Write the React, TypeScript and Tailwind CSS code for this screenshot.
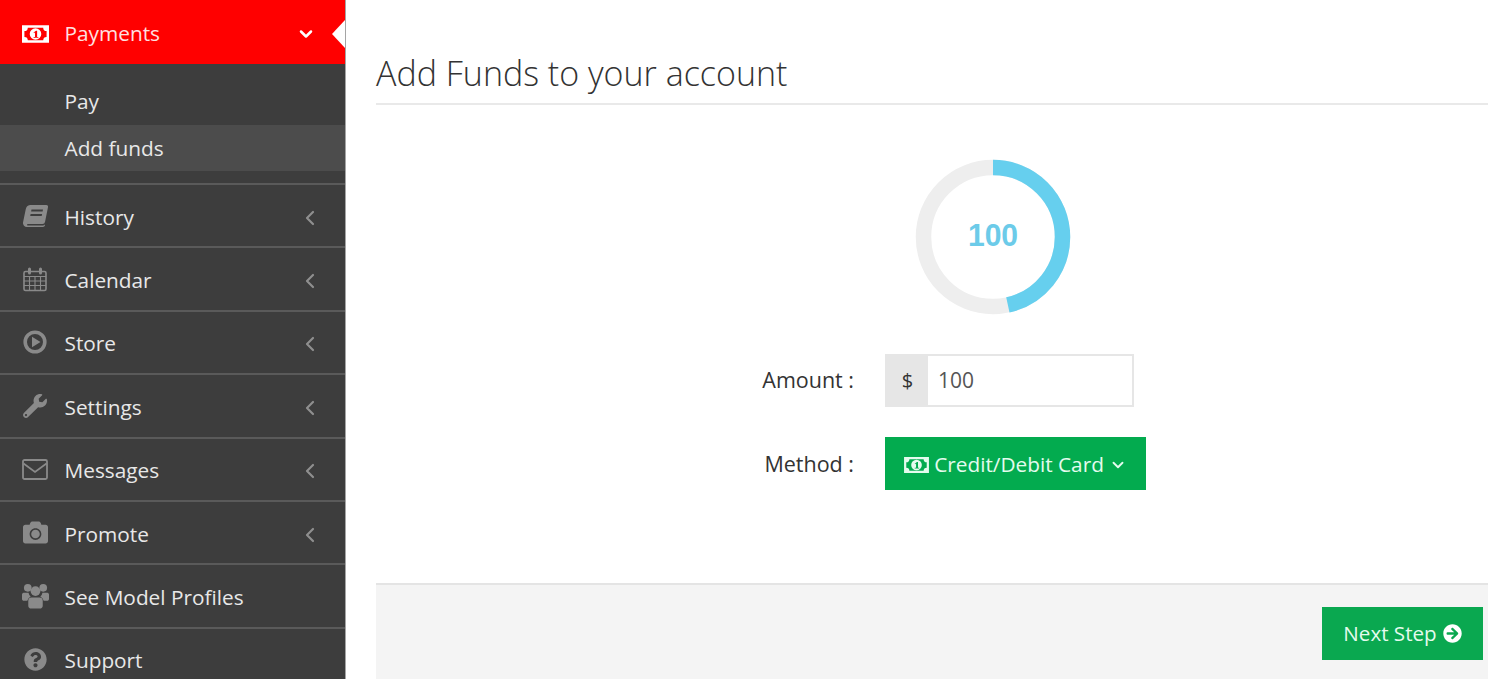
import { ChevronDown, ChevronLeft } from "lucide-react";
import { FaWrench, FaCamera, FaQuestionCircle, FaArrowCircleRight } from "react-icons/fa";

function MoneyIcon({ className }: { className?: string }) {
  return (
    <svg viewBox="0 0 28 18" className={className} fill="currentColor">
      <path
        fillRule="evenodd"
        d="M0 0h28v18H0zM2.500 6v6a3.500 3.500 0 0 1 3.500 3.500h16a3.500 3.500 0 0 1 3.500-3.500V6A3.500 3.500 0 0 1 22 2.500H6A3.500 3.500 0 0 1 2.500 6zM14 3a6 6 0 1 0 0 12 6 6 0 0 0 0-12zM12 7.500l2.500-2h1.200v6.500H17v1h-5v-1h1.500V7.300l-1 .8z"
      />
    </svg>
  );
}

function BookIcon({ className }: { className?: string }) {
  return (
    <svg viewBox="0 0 25 22" className={className} fill="currentColor">
      <path
        fillRule="evenodd"
        d="M7 0h16a2 2 0 0 1 2 2.300L22 17a2.500 2.500 0 0 1-2.500 2H4.500a1 1 0 0 0 0 1.500H20a1.500 1.500 0 0 0 1.400-1l.6.800A2.500 2.500 0 0 1 20 22H4a4 4 0 0 1-4-4.500L2.800 4A5 5 0 0 1 7 0zM8.500 4.500l-.4 2h11.500l.4-2zM7.600 9l-.4 2h11.500l.4-2z"
      />
    </svg>
  );
}

function CalendarIcon({ className }: { className?: string }) {
  return (
    <svg viewBox="0 0 24 24" className={className} fill="none" stroke="currentColor">
      <rect x="1" y="4" width="22" height="19" rx="1.500" strokeWidth="1.600" />
      <path d="M1 9h22M1 13.500h22M1 18h22M6.500 9v14M12 9v14M17.500 9v14" strokeWidth="1.100" />
      <path d="M6.500 1.500v4M17.500 1.500v4" strokeWidth="3" strokeLinecap="round" />
    </svg>
  );
}

function PlayIcon({ className }: { className?: string }) {
  return (
    <svg viewBox="0 0 24 24" className={className} fill="none">
      <circle cx="12" cy="12" r="9.800" stroke="currentColor" strokeWidth="3.600" />
      <path d="M9 6.800v10.400l8.500-5.200z" fill="currentColor" />
    </svg>
  );
}

function EnvelopeIcon({ className }: { className?: string }) {
  return (
    <svg viewBox="0 0 26 21" className={className} fill="none" stroke="currentColor" strokeWidth="1.800">
      <rect x="1" y="1" width="24" height="19" rx="1.500" />
      <path d="M1.500 4.500 13 13l11.500-8.500" />
    </svg>
  );
}

function UsersIcon({ className }: { className?: string }) {
  return (
    <svg viewBox="0 0 28 26" className={className} fill="currentColor">
      <circle cx="6" cy="4.500" r="4" />
      <circle cx="22" cy="4.500" r="4" />
      <circle cx="14" cy="8" r="5" />
      <path d="M0 11.500C0 10 1 9.500 2.500 9.500h4.300A7 7 0 0 0 9 13.600 7.500 7.500 0 0 0 5.500 18H2C.8 18 0 17 0 16zM28 11.500c0-1.500-1-2-2.500-2h-4.300A7 7 0 0 1 19 13.600a7.500 7.500 0 0 1 3.500 4.400H26c1.200 0 2-1 2-2zM10 14.500h8a3.500 3.500 0 0 1 3.500 3.500v5c0 1.700-1.300 3-3 3h-9c-1.700 0-3-1.300-3-3v-5a3.500 3.500 0 0 1 3.500-3.500z" />
    </svg>
  );
}

const menu = [
  { label: "History", icon: <BookIcon className="w-[25px] h-[22px]" />, arrow: true },
  { label: "Calendar", icon: <CalendarIcon className="w-[24px] h-[25px]" />, arrow: true },
  { label: "Store", icon: <PlayIcon className="w-[24px] h-[24px]" />, arrow: true },
  { label: "Settings", icon: <FaWrench className="w-[24px] h-[24px]" />, arrow: true },
  { label: "Messages", icon: <EnvelopeIcon className="w-[26px] h-[21px]" />, arrow: true },
  { label: "Promote", icon: <FaCamera className="w-[27px] h-[25px]" />, arrow: true },
  { label: "See Model Profiles", icon: <UsersIcon className="w-[27px] h-[26px]" />, arrow: false },
  { label: "Support", icon: <FaQuestionCircle className="w-[23px] h-[23px]" />, arrow: false },
];

export default function App() {
  return (
    <div className="flex h-[679px] overflow-hidden bg-white font-['Open_Sans',sans-serif]">
      <aside className="w-[346px] shrink-0 bg-[#3d3d3d] border-r border-[#a5a5a5] text-[#e8e8e8] text-[20.800px]">
        <div className="relative flex items-center h-[64px] bg-[#ff0000] text-[#ffe0e0] pt-[3px]">
          <div className="w-[64.500px] pl-[22px] flex shrink-0">
            <MoneyIcon className="w-[27px] h-[18px] text-white" />
          </div>
          <span>Payments</span>
          <ChevronDown className="ml-auto mr-[29px] w-[20px] h-[20px] text-white" strokeWidth={3} />
          <svg viewBox="0 0 13 28" className="absolute right-0 top-[20px] w-[13px] h-[28px] text-white" fill="currentColor">
            <polygon points="13,0 0,14 13,28" />
          </svg>
        </div>
        <div className="h-[121px] pt-[14px] border-b-2 border-[#5a5a5a]">
          <div className="h-[47px] flex items-center pl-[64.500px]">Pay</div>
          <div className="h-[46px] flex items-center pl-[64.500px] pt-[2px] bg-[#4c4c4c]">Add funds</div>
        </div>
        {menu.map((item) => (
          <div key={item.label} className="flex items-center h-[63.400px] border-b-2 border-[#5a5a5a]">
            <div className="w-[64.500px] shrink-0 flex justify-center pl-[6px] text-[#8a8a8a]">{item.icon}</div>
            <span className="mt-[3px]">{item.label}</span>
            {item.arrow && <ChevronLeft className="ml-auto mr-[23px] mt-[4px] w-[24px] h-[24px] text-[#8f8f8f]" strokeWidth={2.200} />}
          </div>
        ))}
      </aside>

      <main className="flex-1 pl-[30px] min-w-0">
        <h1 className="h-[105px] pt-[48px] border-b-2 border-[#e9e9e9] text-[34px] leading-[50px] font-light text-[#333333]">
          Add Funds to your account
        </h1>

        <div className="ml-[539px] mt-[54px] w-[156px] h-[156px] relative">
          <svg viewBox="0 0 156 156" className="w-[156px] h-[156px] -rotate-90">
            <circle cx="78" cy="78" r="69.500" fill="none" stroke="#eeeeee" strokeWidth="15.500" />
            <circle
              cx="78"
              cy="78"
              r="69.500"
              fill="none"
              stroke="#66cfee"
              strokeWidth="15.500"
              strokeDasharray="203 440"
            />
          </svg>
          <div className="absolute inset-0 flex items-center justify-center pb-[4px] font-['Liberation_Sans',sans-serif] font-bold text-[32px] scale-x-[0.94] text-[#6ccbe9]">
            100
          </div>
        </div>

        <div className="mt-[39px] flex items-center text-[21.500px] text-[#333333]">
          <label className="w-[478px] text-right shrink-0">Amount :</label>
          <div className="ml-[31px] flex w-[249px] h-[53px] border-2 border-[#e6e6e6]">
            <span className="w-[41px] bg-[#e6e6e6] flex items-center justify-center text-[20px]">$</span>
            <span className="pl-[10px] flex items-center text-[21px] text-[#555555]">100</span>
          </div>
        </div>

        <div className="mt-[30px] flex items-center text-[21.500px] text-[#333333]">
          <label className="w-[478px] text-right shrink-0 pt-[1px]">Method :</label>
          <button className="ml-[31px] flex items-center justify-center gap-[5px] w-[261px] h-[53px] bg-[#03ab4f] text-[#e4fbee] text-[20.800px] pt-[2px]">
            <MoneyIcon className="w-[25px] h-[16px]" />
            <span>Credit/Debit Card</span>
            <ChevronDown className="w-[18px] h-[18px]" strokeWidth={2.500} />
          </button>
        </div>

        <div className="mt-[93px] h-[120px] bg-[#f4f4f4] border-t-2 border-[#e4e4e4] flex justify-end pt-[22px] pr-[5px]">
          <button className="flex items-center justify-center gap-[6px] w-[161px] h-[53px] bg-[#0aa850] text-[#e4fbee] text-[20.600px]">
            <span>Next Step</span>
            <FaArrowCircleRight className="w-[19px] h-[19px] text-white" />
          </button>
        </div>
      </main>
    </div>
  );
}
